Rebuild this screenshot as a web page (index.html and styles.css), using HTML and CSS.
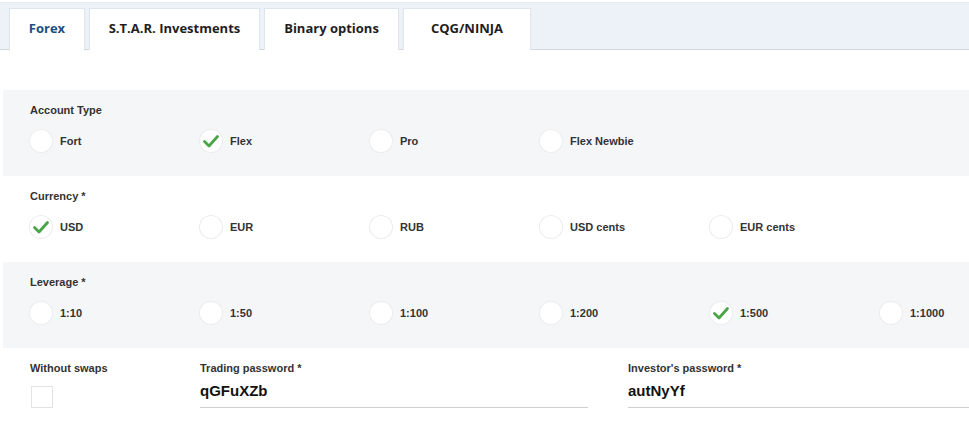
FILE: index.html
```html
<!DOCTYPE html>
<html>
<head>
<meta charset="utf-8">
<link rel="stylesheet" href="styles.css">
</head>
<body>
<div class="tabs">
  <div class="tab active">Forex</div>
  <div class="tab">S.T.A.R. Investments</div>
  <div class="tab">Binary options</div>
  <div class="tab">CQG/NINJA</div>
</div>
<div class="form">
  <div class="section gray">
    <div class="label">Account Type</div>
    <div class="options">
      <div class="opt"><span class="radio"></span><span class="text">Fort</span></div>
      <div class="opt"><span class="radio checked"><svg viewBox="0 0 22 22" width="22" height="22"><path d="M4.5 11.5 L9 16 L17.5 6.5" fill="none" stroke="#4aa547" stroke-width="2.8" stroke-linecap="round" stroke-linejoin="round"/></svg></span><span class="text">Flex</span></div>
      <div class="opt"><span class="radio"></span><span class="text">Pro</span></div>
      <div class="opt"><span class="radio"></span><span class="text">Flex Newbie</span></div>
    </div>
  </div>
  <div class="section">
    <div class="label">Currency *</div>
    <div class="options">
      <div class="opt"><span class="radio checked"><svg viewBox="0 0 22 22" width="22" height="22"><path d="M4.5 11.5 L9 16 L17.5 6.5" fill="none" stroke="#4aa547" stroke-width="2.8" stroke-linecap="round" stroke-linejoin="round"/></svg></span><span class="text">USD</span></div>
      <div class="opt"><span class="radio"></span><span class="text">EUR</span></div>
      <div class="opt"><span class="radio"></span><span class="text">RUB</span></div>
      <div class="opt"><span class="radio"></span><span class="text">USD cents</span></div>
      <div class="opt"><span class="radio"></span><span class="text">EUR cents</span></div>
    </div>
  </div>
  <div class="section gray">
    <div class="label">Leverage *</div>
    <div class="options">
      <div class="opt"><span class="radio"></span><span class="text">1:10</span></div>
      <div class="opt"><span class="radio"></span><span class="text">1:50</span></div>
      <div class="opt"><span class="radio"></span><span class="text">1:100</span></div>
      <div class="opt"><span class="radio"></span><span class="text">1:200</span></div>
      <div class="opt"><span class="radio checked"><svg viewBox="0 0 22 22" width="22" height="22"><path d="M4.5 11.5 L9 16 L17.5 6.5" fill="none" stroke="#4aa547" stroke-width="2.8" stroke-linecap="round" stroke-linejoin="round"/></svg></span><span class="text">1:500</span></div>
      <div class="opt"><span class="radio"></span><span class="text">1:1000</span></div>
    </div>
  </div>
  <div class="section fields">
    <div class="field swaps">
      <div class="label">Without swaps</div>
      <span class="checkbox"></span>
    </div>
    <div class="field trading">
      <div class="label">Trading password *</div>
      <div class="value">qGFuXZb</div>
    </div>
    <div class="field investor">
      <div class="label">Investor's password *</div>
      <div class="value">autNyYf</div>
    </div>
  </div>
</div>
</body>
</html>
```
FILE: styles.css
```css
html, body {
  margin: 0;
  padding: 0;
  background: #fff;
  font-family: "Liberation Sans", Arial, sans-serif;
  color: #333;
}
.tabs {
  display: flex;
  gap: 4px;
  margin-top: 2px;
  padding: 5px 0 0 9px;
  background: #edf2f9;
  border-top: 1px solid #e6ebf1;
  border-bottom: 1px solid #d3d7dc;
  height: 41px;
}
.tab {
  display: flex;
  align-items: center;
  justify-content: center;
  white-space: nowrap;
  padding: 0 0 4px 0;
  background: #fff;
  border: 1px solid #dfe5ec;
  border-bottom: none;
  font-family: "Open Sans", sans-serif;
  font-weight: 700;
  font-size: 13px;
  color: #1e1e1e;
  height: 42px;
  box-sizing: border-box;
  flex: none;
}
.tab.active {
  color: #1c4f7d;
  height: 43px;
  margin-bottom: -1px;
  padding-bottom: 5px;
}
.tab:nth-child(1) { width: 76px; }
.tab:nth-child(2) { width: 171px; }
.tab:nth-child(3) { width: 135px; }
.tab:nth-child(4) { width: 128px; }
.form {
  margin-top: 40px;
  margin-left: 3px;
  overflow: hidden;
}
.section {
  height: 86px;
  box-sizing: border-box;
  padding: 13px 0 0 27px;
  overflow: hidden;
}
.section.gray {
  background: #f5f6f8;
}
.label {
  font-size: 11px;
  font-weight: 700;
  line-height: 14px;
  color: #333;
  white-space: nowrap;
}
.options {
  display: flex;
  margin-top: 13px;
}
.opt {
  width: 170px;
  flex: none;
  display: flex;
  align-items: center;
}
.radio {
  width: 22px;
  height: 22px;
  border-radius: 50%;
  background: #fff;
  box-shadow: 0 0 0 1px #ececec;
  display: inline-block;
  flex: none;
}
.radio svg { display: block; }
.text {
  margin-left: 8px;
  font-size: 11px;
  font-weight: 700;
  color: #333;
  white-space: nowrap;
}
.fields {
  display: flex;
  padding-top: 13px;
}
.swaps { width: 170px; flex: none; }
.checkbox {
  display: block;
  margin-top: 11px;
  margin-left: 1px;
  width: 20px;
  height: 20px;
  border: 1px solid #e3e3e3;
  background: #fff;
}
.trading { width: 388px; margin-right: 40px; flex: none; }
.investor { flex: 1; }
.value {
  margin-top: 7px;
  font-size: 15px;
  font-weight: 700;
  color: #111;
  line-height: 18px;
  padding-bottom: 7px;
  border-bottom: 1px solid #cfcfcf;
}
```
